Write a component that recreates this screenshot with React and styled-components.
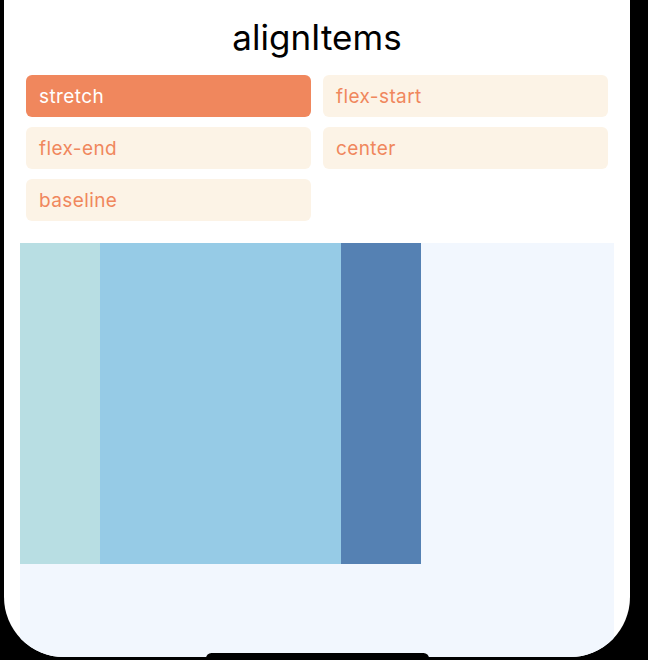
import React, { useState } from "react";
import styled, { createGlobalStyle } from "styled-components";

const Global = createGlobalStyle`
  html, body {
    margin: 0;
    padding: 0;
    background: #000;
  }
  body {
    font-family: Inter, "Noto Sans", sans-serif;
  }
`;

const Device = styled.div`
  width: 648px;
  height: 660px;
  overflow: hidden;
  background: #000;
  position: relative;
`;

const Screen = styled.div`
  margin-left: 4px;
  width: 626px;
  height: 657px;
  background: #fff;
  border-radius: 0 0 60px 60px;
  overflow: hidden;
  display: flex;
  flex-direction: column;
`;

const Title = styled.h1`
  margin: 14px 0 0;
  height: 46px;
  font-size: 35px;
  line-height: 46px;
  font-weight: 400;
  color: #000;
  text-align: center;
`;

const Options = styled.div`
  display: grid;
  grid-template-columns: 1fr 1fr;
  column-gap: 12px;
  row-gap: 10px;
  padding: 15px 22px 0;
`;

const Option = styled.button`
  height: 42px;
  border: none;
  border-radius: 6px;
  padding: 0 13px;
  text-align: left;
  font-family: Inter, "Noto Sans", sans-serif;
  font-size: 19px;
  font-weight: 400;
  letter-spacing: 0.4px;
  cursor: pointer;
  background: ${(p) => (p.active ? "#f0875d" : "#fcf3e6")};
  color: ${(p) => (p.active ? "#fff" : "#f0875d")};
`;

const Demo = styled.div`
  flex: 1;
  margin: 22px 16px 0;
  background: #f2f7fe;
  display: flex;
  align-items: flex-start;
`;

const Box = styled.div`
  width: ${(p) => p.w}px;
  height: 321px;
  background: ${(p) => p.color};
`;

const HomeBar = styled.div`
  position: absolute;
  left: 206px;
  bottom: -4px;
  width: 223px;
  height: 11px;
  border-radius: 6px;
  background: #000;
`;

const values = ["stretch", "flex-start", "flex-end", "center", "baseline"];

export default function App() {
  const [selected, setSelected] = useState("stretch");
  return (
    <>
      <Global />
      <Device>
        <Screen>
          <Title>alignItems</Title>
          <Options>
            {values.map((v) => (
              <Option key={v} active={v === selected} onClick={() => setSelected(v)}>
                {v}
              </Option>
            ))}
          </Options>
          <Demo>
            <Box w={80} color="#b8dee3" />
            <Box w={241} color="#96cbe6" />
            <Box w={80} color="#5581b3" />
          </Demo>
        </Screen>
        <HomeBar />
      </Device>
    </>
  );
}
